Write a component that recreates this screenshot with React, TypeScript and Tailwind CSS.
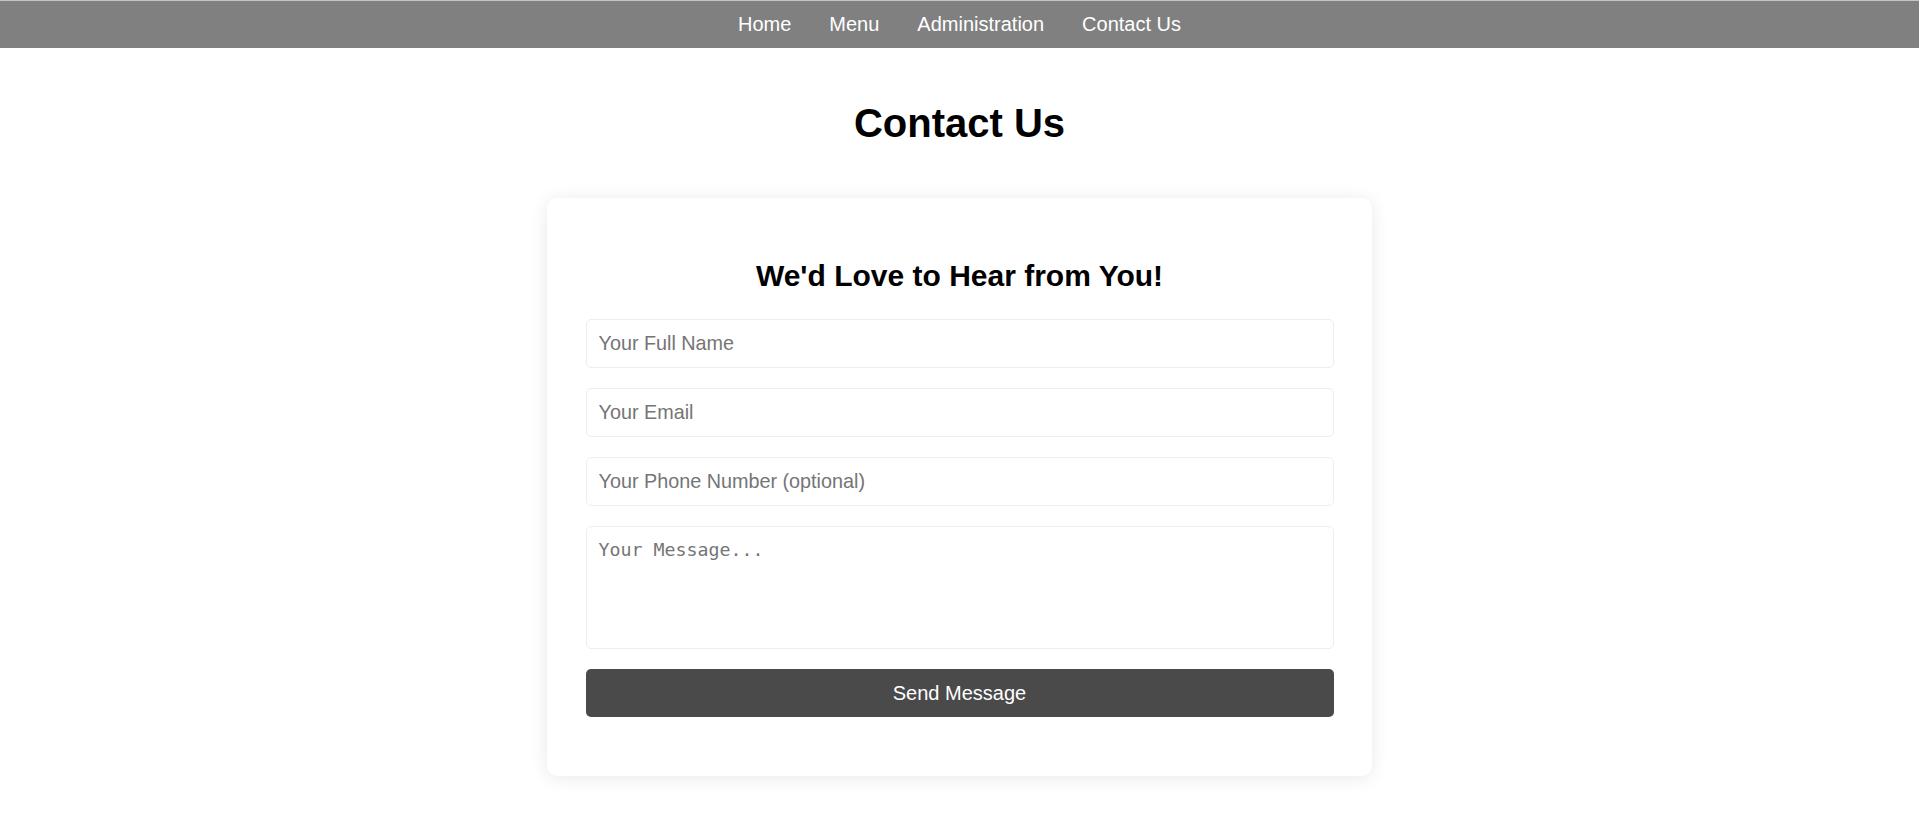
const navLinks = ["Home", "Menu", "Administration", "Contact Us"]

const fields = [
    { name: "name", type: "text", placeholder: "Your Full Name" },
    { name: "email", type: "email", placeholder: "Your Email" },
    { name: "phone", type: "tel", placeholder: "Your Phone Number (optional)" },
]

const Navbar = () => (
    <nav className="border-t border-[#c4c4c4] bg-[#808080]">
        <ul className="flex h-[47px] items-center justify-center gap-[38px] pt-[2px]">
            {navLinks.map((link) => (
                <li key={link}>
                    <a href="#" className="text-[20px] leading-[23px] text-white">
                        {link}
                    </a>
                </li>
            ))}
        </ul>
    </nav>
)

const ContactForm = () => (
    <div className="mx-auto mt-[52px] w-[825px] rounded-[10px] bg-white px-[38.5px] pt-[61px] pb-[58.5px] shadow-[0_2px_18px_rgba(0,0,0,0.09)]">
        <h2 className="text-center text-[30px] leading-[34px] font-bold text-black">We'd Love to Hear from You!</h2>

        <form className="mt-[26px] flex flex-col gap-[20px]" onSubmit={(e) => e.preventDefault()}>
            {fields.map((field) => (
                <input
                    key={field.name}
                    name={field.name}
                    type={field.type}
                    placeholder={field.placeholder}
                    className="h-[49px] w-full rounded-[5px] border border-[#eeeeee] px-[12px] text-[19.8px] text-[#333] outline-none placeholder:text-[#757575]"
                />
            ))}

            <textarea
                name="message"
                placeholder="Your Message..."
                className="h-[123px] w-full resize-none rounded-[5px] border border-[#eeeeee] px-[12px] py-[12px] font-['DejaVu_Sans_Mono',monospace] text-[18.3px] leading-[22px] text-[#333] outline-none placeholder:text-[#757575]"
            />

            <button
                type="submit"
                className="h-[48px] w-full rounded-[5px] bg-[#4a4a4a] text-[20px] text-white"
            >
                Send Message
            </button>
        </form>
    </div>
)

export default function App() {
    return (
        <div className="min-h-screen bg-white pb-10 font-['Liberation_Sans',Arial,sans-serif]">
            <Navbar />

            <h1 className="mt-[52px] text-center text-[40px] leading-[46px] font-bold text-black">Contact Us</h1>

            <ContactForm />
        </div>
    )
}
